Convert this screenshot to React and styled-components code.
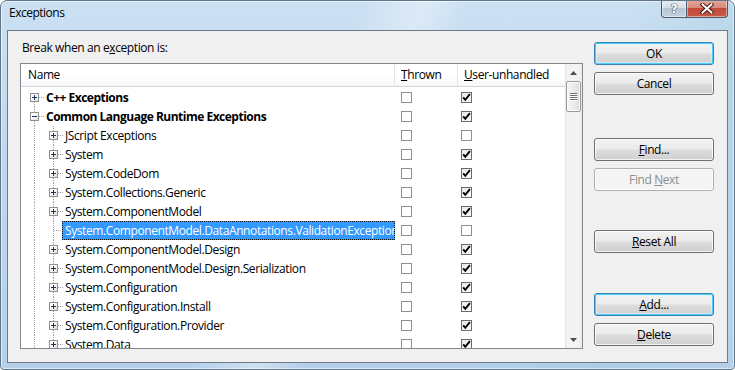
import React from 'react';
import styled, { createGlobalStyle, css } from 'styled-components';

const GlobalStyle = createGlobalStyle`
  html, body {
    margin: 0;
    padding: 0;
    background: #fff;
  }
  body {
    font-family: "Open Sans", "Noto Sans", sans-serif;
    font-size: 12px;
    letter-spacing: -0.4px;
    color: #000;
  }
`;

const Window = styled.div`
  width: 735px;
  height: 370px;
  box-sizing: border-box;
  border: 1px solid #62768a;
  border-radius: 7px 7px 4px 4px;
  padding: 0 6px 6px;
  display: flex;
  flex-direction: column;
  overflow: hidden;
  background:
    linear-gradient(115deg, transparent 40%, rgba(255,255,255,0.35) 47%, transparent 52%, transparent 70%, rgba(150,200,210,0.35) 85%, transparent 95%),
    linear-gradient(180deg, #cbe0f3 0%, #bfd7ee 45%, #b6d0ea 100%);
  box-shadow: inset 0 0 0 1px rgba(255,255,255,0.55);
`;

const TitleBar = styled.div`
  height: 29px;
  flex: none;
  display: flex;
  align-items: flex-start;
  justify-content: space-between;
  padding-left: 2px;
`;

const Caption = styled.span`
  padding-top: 4px;
  line-height: 16px;
  letter-spacing: -0.5px;
  color: #000;
`;

const CaptionButtons = styled.div`
  display: flex;
  margin-top: -1px;
`;

const CaptionButton = styled.div`
  height: 18px;
  width: ${p => p.$w}px;
  box-sizing: border-box;
  border: 1px solid #4b5a6b;
  border-top: none;
  display: flex;
  align-items: center;
  justify-content: center;
  box-shadow: inset 0 0 0 1px rgba(255,255,255,0.45);
  ${p => p.$close
    ? css`
      border-left: none;
      border-radius: 0 0 4px 0;
      background: linear-gradient(180deg, #e4a89c 0%, #d88b7c 45%, #c4493b 50%, #c75a48 100%);
    `
    : css`
      border-radius: 0 0 0 4px;
      background: linear-gradient(180deg, #e6eef6 0%, #d3dee9 45%, #b7c6d5 50%, #c5d3e1 100%);
    `}
`;

const HelpGlyph = styled.span`
  font-family: "DejaVu Sans", sans-serif;
  font-weight: bold;
  font-size: 12px;
  line-height: 14px;
  color: #fff;
  text-shadow: 0 0 1px #3a4756, 0 0 1px #3a4756, 0 0 1px #3a4756;
`;

const Client = styled.div`
  flex: 1;
  border: 1px solid #6d7b89;
  background: #f0f0f0;
  display: flex;
  padding: 0 13px 0 12px;
  gap: 11px;
`;

const LeftColumn = styled.div`
  width: 563px;
  display: flex;
  flex-direction: column;
  padding-top: 9px;
`;

const Prompt = styled.div`
  line-height: 16px;
  padding-left: 2px;
  margin-bottom: 7px;
`;

const ListBox = styled.div`
  height: 286px;
  box-sizing: border-box;
  border: 1px solid #828790;
  background: #fff;
  display: flex;
  overflow: hidden;
`;

const ListContent = styled.div`
  flex: 1;
  min-width: 0;
  display: flex;
  flex-direction: column;
  overflow: hidden;
`;

const columns = '374px 63px 1fr';

const HeaderRow = styled.div`
  display: grid;
  grid-template-columns: ${columns};
  height: 22px;
  flex: none;
  border-bottom: 1px solid #d5d5d5;
  background: linear-gradient(180deg, #ffffff 0%, #ffffff 55%, #f6f7f9 100%);
`;

const HeaderCell = styled.div`
  padding-left: ${p => p.$pad}px;
  line-height: 22px;
  white-space: nowrap;
  border-right: ${p => (p.$last ? 'none' : '1px solid #e3e5e8')};
`;

const Rows = styled.div`
  padding-top: 1px;
`;

const Row = styled.div`
  display: grid;
  grid-template-columns: ${columns};
  height: 19px;
`;

const NameCell = styled.div`
  display: flex;
  padding-left: 4px;
  overflow: hidden;
  white-space: nowrap;
`;

const lineColor = '#a0a0a0';

const Guide = styled.span`
  flex: none;
  width: 19px;
  position: relative;
  &::before {
    content: '';
    position: absolute;
    left: 9px;
    top: 0;
    bottom: 0;
    border-left: 1px dotted ${lineColor};
  }
`;

const Node = styled.span`
  flex: none;
  width: 19px;
  position: relative;
  &::before {
    content: '';
    position: absolute;
    left: 9px;
    top: ${p => (p.$first ? '9px' : '0')};
    bottom: ${p => (p.$last ? '10px' : '0')};
    border-left: 1px dotted ${lineColor};
  }
  &::after {
    content: '';
    position: absolute;
    left: 10px;
    top: 9px;
    width: 9px;
    border-top: 1px dotted ${lineColor};
  }
`;

const Expander = styled.span`
  position: absolute;
  z-index: 1;
  left: 5px;
  top: 5px;
  width: 9px;
  height: 9px;
  box-sizing: border-box;
  border: 1px solid #919191;
  background: linear-gradient(135deg, #ffffff 30%, #dedede 100%);
  &::before {
    content: '';
    position: absolute;
    left: 1px;
    top: 3px;
    width: 5px;
    height: 1px;
    background: #1f3560;
  }
  ${p => !p.$open && css`
    &::after {
      content: '';
      position: absolute;
      left: 3px;
      top: 1px;
      width: 1px;
      height: 5px;
      background: #1f3560;
    }
  `}
`;

const Label = styled.span`
  flex: 0 1 auto;
  min-width: 0;
  overflow: hidden;
  margin-left: -1px;
  padding: 0 3px;
  line-height: 19px;
  font-weight: ${p => (p.$bold ? 700 : 400)};
  letter-spacing: ${p => (p.$bold ? '-0.5px' : '-0.4px')};
  ${p => p.$selected && css`
    background: #3399ff;
    color: #fff;
    outline: 1px dotted #111;
    outline-offset: -1px;
  `}
`;

const CheckCell = styled.div`
  padding: 4px 0 0 ${p => p.$pad}px;
`;

const Box = styled.span`
  display: block;
  width: 11px;
  height: 11px;
  box-sizing: border-box;
  border: 1px solid ${p => (p.$checked ? '#6b6b6b' : '#8e8f8f')};
  background: ${p => (p.$checked ? 'linear-gradient(135deg, #e9e9e9, #fbfbfb)' : '#fff')};
  svg {
    display: block;
  }
`;

const ScrollBar = styled.div`
  flex: none;
  width: 17px;
  display: flex;
  flex-direction: column;
  background: linear-gradient(90deg, #e3e3e3 0, #f3f3f3 2px, #f3f3f3 14px, #e8e8e8 17px);
`;

const Arrow = styled.div`
  height: 17px;
  flex: none;
  display: flex;
  align-items: center;
  justify-content: center;
`;

const Track = styled.div`
  flex: 1;
  padding: 0 1px;
`;

const Thumb = styled.div`
  height: 31px;
  box-sizing: border-box;
  border: 1px solid #9a9a9a;
  border-radius: 2px;
  background: linear-gradient(90deg, #f5f5f5 0%, #ececec 50%, #dadada 100%);
  box-shadow: inset 0 0 0 1px rgba(255,255,255,0.8);
  display: flex;
  flex-direction: column;
  align-items: center;
  justify-content: center;
  gap: 1px;
`;

const Grip = styled.span`
  width: 7px;
  height: 1px;
  background: #6e6e6e;
  box-shadow: 0 1px 0 #fff;
`;

const RightColumn = styled.div`
  width: 120px;
  display: flex;
  flex-direction: column;
`;

const Button = styled.button`
  width: 120px;
  height: 23px;
  margin-top: ${p => p.$gap}px;
  box-sizing: border-box;
  padding: 0;
  font: inherit;
  letter-spacing: inherit;
  color: #000;
  border: 1px solid #707070;
  border-radius: 3px;
  background: linear-gradient(180deg, #f2f2f2 0%, #ebebeb 48%, #dddddd 52%, #cfcfcf 100%);
  box-shadow: inset 0 0 0 1px rgba(255,255,255,0.75);
  ${p => p.$default && css`
    border-color: #3c7fb1;
    box-shadow: inset 0 0 0 1px #48d0fb, inset 0 0 0 2px rgba(220,245,255,0.6);
  `}
  &:disabled {
    border-color: #adb2b5;
    background: #f4f4f4;
    color: #8d8d8d;
    box-shadow: inset 0 0 0 1px #fcfcfc;
  }
`;

const rows = [
  { level: 0, label: 'C++ Exceptions', bold: true, box: 'closed', first: true, user: true },
  { level: 0, label: 'Common Language Runtime Exceptions', bold: true, box: 'open', user: true },
  { level: 1, label: 'JScript Exceptions', box: 'closed', user: false },
  { level: 1, label: 'System', box: 'closed', user: true },
  { level: 1, label: 'System.CodeDom', box: 'closed', user: true },
  { level: 1, label: 'System.Collections.Generic', box: 'closed', user: true },
  { level: 1, label: 'System.ComponentModel', box: 'closed', user: true },
  { level: 1, label: 'System.ComponentModel.DataAnnotations.ValidationException', selected: true, user: false },
  { level: 1, label: 'System.ComponentModel.Design', box: 'closed', user: true },
  { level: 1, label: 'System.ComponentModel.Design.Serialization', box: 'closed', user: true },
  { level: 1, label: 'System.Configuration', box: 'closed', user: true },
  { level: 1, label: 'System.Configuration.Install', box: 'closed', user: true },
  { level: 1, label: 'System.Configuration.Provider', box: 'closed', user: true },
  { level: 1, label: 'System.Data', box: 'closed', user: true },
];

function CheckBox({ checked }) {
  return (
    <Box $checked={checked}>
      {checked && (
        <svg width="9" height="9" viewBox="0 0 9 9">
          <path d="M1.2 4.3 L3.3 6.8 L7.9 1.2" fill="none" stroke="#000" strokeWidth="1.9" />
        </svg>
      )}
    </Box>
  );
}

function TreeRow({ row }) {
  const guides = Array.from({ length: row.level }, (_, i) => <Guide key={i} />);
  return (
    <Row>
      <NameCell>
        {guides}
        <Node $first={row.first}>
          {row.box && <Expander $open={row.box === 'open'} />}
        </Node>
        <Label $bold={row.bold} $selected={row.selected}>{row.label}</Label>
      </NameCell>
      <CheckCell $pad={6}><CheckBox checked={false} /></CheckCell>
      <CheckCell $pad={3}><CheckBox checked={row.user} /></CheckCell>
    </Row>
  );
}

export default function App() {
  return (
    <>
      <GlobalStyle />
      <Window>
        <TitleBar>
          <Caption>Exceptions</Caption>
          <CaptionButtons>
            <CaptionButton $w={26}><HelpGlyph>?</HelpGlyph></CaptionButton>
            <CaptionButton $w={41} $close>
              <svg width="14" height="11" viewBox="0 0 14 11">
                <path d="M2.5 1.5 L11.5 9.5 M11.5 1.5 L2.5 9.5" stroke="#4a1c16" strokeWidth="4" strokeLinecap="square" />
                <path d="M2.5 1.5 L11.5 9.5 M11.5 1.5 L2.5 9.5" stroke="#fff" strokeWidth="2" strokeLinecap="square" />
              </svg>
            </CaptionButton>
          </CaptionButtons>
        </TitleBar>
        <Client>
          <LeftColumn>
            <Prompt>Break when an e<u>x</u>ception is:</Prompt>
            <ListBox>
              <ListContent>
                <HeaderRow>
                  <HeaderCell $pad={7}>Name</HeaderCell>
                  <HeaderCell $pad={6}><u>T</u>hrown</HeaderCell>
                  <HeaderCell $pad={6} $last><u>U</u>ser-unhandled</HeaderCell>
                </HeaderRow>
                <Rows>
                  {rows.map(r => <TreeRow key={r.label} row={r} />)}
                </Rows>
              </ListContent>
              <ScrollBar>
                <Arrow>
                  <svg width="7" height="4" viewBox="0 0 7 4"><path d="M0 4 L3.5 0 L7 4 Z" fill="#4d4d4d" /></svg>
                </Arrow>
                <Track>
                  <Thumb>
                    <Grip /><Grip /><Grip /><Grip />
                  </Thumb>
                </Track>
                <Arrow>
                  <svg width="7" height="4" viewBox="0 0 7 4"><path d="M0 0 L7 0 L3.5 4 Z" fill="#4d4d4d" /></svg>
                </Arrow>
              </ScrollBar>
            </ListBox>
          </LeftColumn>
          <RightColumn>
            <Button $gap={11} $default>OK</Button>
            <Button $gap={7}>Cancel</Button>
            <Button $gap={43}><u>F</u>ind...</Button>
            <Button $gap={7} disabled>Find <u>N</u>ext</Button>
            <Button $gap={39}><u>R</u>eset All</Button>
            <Button $gap={40} $default><u>A</u>dd...</Button>
            <Button $gap={7}><u>D</u>elete</Button>
          </RightColumn>
        </Client>
      </Window>
    </>
  );
}
